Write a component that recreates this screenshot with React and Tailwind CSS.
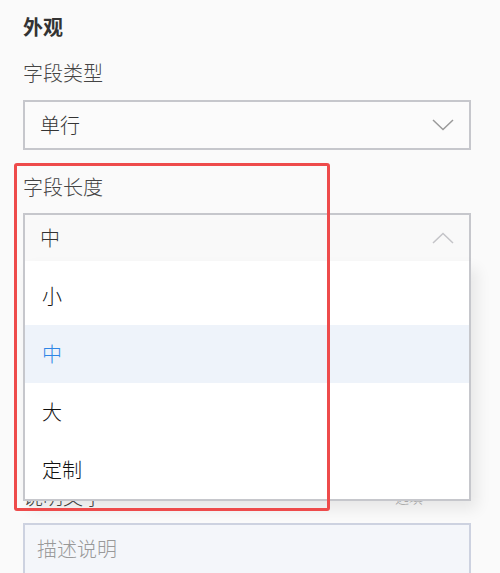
import React from "react";

function Chevron({ up, color }) {
  return (
    <svg width="22" height="12" viewBox="0 0 22 12" fill="none">
      <path
        d={up ? "M1 11 L11 1.5 L21 11" : "M1 1 L11 10.5 L21 1"}
        stroke={color}
        strokeWidth="1.5"
      />
    </svg>
  );
}

export default function App() {
  const options = ["小", "中", "大", "定制"];
  return (
    <div
      className="relative w-[500px] h-[573px] overflow-hidden bg-[#fafafa] px-[23px] pr-[29px] font-light"
      style={{ fontFamily: '"Noto Sans CJK SC", "Noto Sans", sans-serif' }}
    >
      <div className="mt-[13px] h-[28px] leading-[28px] text-[20px] font-bold text-[#333]">外观</div>

      <div className="mt-[18px] h-[28px] leading-[28px] text-[20px] text-[#444]">字段类型</div>
      <div className="mt-[13px] h-[50px] border-2 border-[#c6c7cc] bg-[#fbfbfb] flex items-center justify-between pl-[15px] pr-[15px]">
        <span className="text-[20px] text-[#333]">单行</span>
        <Chevron color="#9a9a9a" />
      </div>

      <div className="mt-[23px] h-[28px] leading-[28px] text-[20px] text-[#444]">字段长度</div>
      <div className="relative mt-[12px] h-[50px]">
        <div className="h-[48px] border-2 border-b-0 border-[#c6c7cc] bg-[#f9f9f9] flex items-center justify-between pl-[15px] pr-[15px]">
          <span className="text-[20px] text-[#333]">中</span>
          <Chevron up color="#c4c4c8" />
        </div>
        <div className="absolute left-0 right-0 top-[48px] z-10 bg-white border-2 border-t-0 border-[#c6c7cc] pt-[6px] shadow-[6px_8px_14px_rgba(0,0,0,0.08)]">
          {options.map((o) => (
            <div
              key={o}
              className={
                "h-[58px] flex items-center pl-[17px] text-[20px] " +
                (o === "中" ? "bg-[#eef3fa] text-[#2f86e6]" : "text-[#111]")
              }
            >
              {o}
            </div>
          ))}
        </div>
      </div>

      <div className="mt-[220px] h-[28px] leading-[28px] flex justify-between pr-[48px]">
        <span className="text-[20px] text-[#444]">说明文字</span>
        <span className="text-[14px] text-[#aaa]">选填</span>
      </div>
      <div className="mt-[12px] h-[80px] border-2 border-[#cdd2e0] bg-[#f4f6fa] pl-[12px] pt-[10px]">
        <span className="text-[20px] leading-[28px] text-[#999]">描述说明</span>
      </div>

      <div className="absolute left-[14px] top-[163px] w-[316px] h-[348px] z-20 border-[3px] border-[#ee4b4b] rounded-[3px] pointer-events-none" />
    </div>
  );
}
